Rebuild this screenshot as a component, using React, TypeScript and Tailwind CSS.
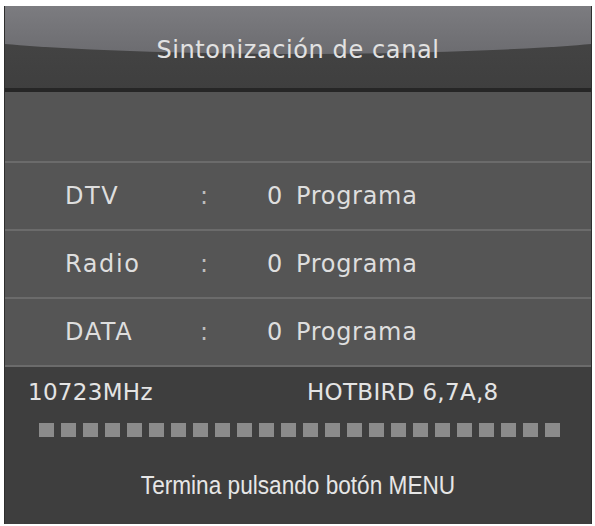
const channels = [
  { label: "DTV", count: 0 },
  { label: "Radio", count: 0 },
  { label: "DATA", count: 0 },
];

const osd = { fontFamily: '"DejaVu Sans", Verdana, sans-serif' };

function ChannelRow({ label, count }: { label: string; count: number }) {
  return (
    <div className="flex h-[68px] items-center border-b-2 border-[#6b6b6b] text-[24px] tracking-[0.7px] text-[#dedede]">
      <span className="w-[195px] pl-[60px] tracking-[1.6px]">{label}</span>
      <span className="w-[67px] text-[#bdbdbd]">:</span>
      <span className="w-[29px]">{count}</span>
      <span>Programa</span>
    </div>
  );
}

export default function App() {
  return (
    <div className="h-[526px] w-[595px] bg-white pl-[4px] pt-[6px]" style={osd}>
      <div className="flex h-[518px] w-[588px] flex-col overflow-hidden border-x border-[#2e2e2e] bg-[#3e3e3e]">
        {/* title bar with glossy top */}
        <div className="relative h-[82px] overflow-hidden bg-gradient-to-b from-[#474747] to-[#3f3f3f]">
          <div className="absolute left-[-25%] top-[-30px] h-[78px] w-[150%] rounded-[50%] bg-gradient-to-b from-[#86868a] to-[#6c6c70]" />
          <div className="relative flex h-full items-center justify-center pt-[6px] text-[24px] tracking-[0.6px] text-[#e2e2e2]">
            Sintonización de canal
          </div>
        </div>
        <div className="h-[4px] bg-[#262626]" />

        <div className="bg-[#555555]">
          <div className="h-[71px] border-b-2 border-[#6b6b6b]" />
          {channels.map((c) => (
            <ChannelRow key={c.label} label={c.label} count={c.count} />
          ))}
        </div>

        {/* frequency, satellite and progress */}
        <div className="flex flex-1 flex-col">
          <div className="mt-[10px] flex h-[30px] items-center text-[23px] leading-none tracking-[0.3px] text-[#e4e4e4]">
            <span className="w-[302px] pl-[23px]">10723MHz</span>
            <span>HOTBIRD 6,7A,8</span>
          </div>
          <div className="mt-[16px] flex gap-[7px] pl-[34px]">
            {Array.from({ length: 24 }, (_, i) => (
              <div key={i} className="h-[14px] w-[15px] bg-[#8b8b8b]" />
            ))}
          </div>
          <div
            className="mt-[33px] flex h-[30px] scale-x-[0.87] items-center justify-center text-[26px] text-[#e6e6e6]"
            style={{ fontFamily: '"Liberation Sans", Arial, sans-serif' }}
          >
            Termina pulsando botón MENU
          </div>
        </div>
      </div>
    </div>
  );
}
